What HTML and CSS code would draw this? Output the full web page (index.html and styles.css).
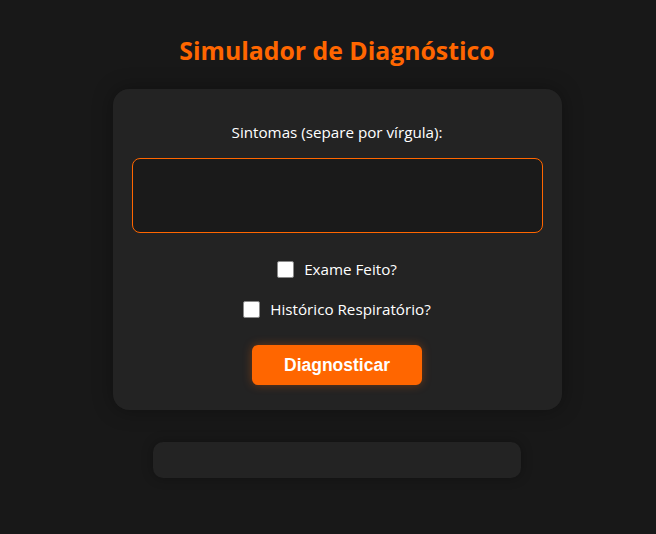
FILE: index.html
```html
<!DOCTYPE html>
<html lang="pt">
<head>
<meta charset="utf-8">
<title>Simulador de Diagnóstico</title>
<link rel="stylesheet" href="styles.css">
</head>
<body>
  <main class="page">
    <h1 class="title">Simulador de Diagnóstico</h1>
    <section class="card">
      <label class="field-label" for="sintomas">Sintomas (separe por vírgula):</label>
      <textarea id="sintomas" class="symptoms"></textarea>
      <label class="check-row"><input type="checkbox" class="check"> <span>Exame Feito?</span></label>
      <label class="check-row"><input type="checkbox" class="check"> <span>Histórico Respiratório?</span></label>
      <button class="btn" type="button">Diagnosticar</button>
    </section>
    <div class="result"></div>
  </main>
</body>
</html>
```
FILE: styles.css
```css
* { box-sizing: border-box; }
html, body { margin: 0; padding: 0; }
body {
  background: #181818;
  color: #ffffff;
  font-family: "Open Sans", "Noto Sans", sans-serif;
  min-height: 534px;
}
.page {
  display: flex;
  flex-direction: column;
  align-items: center;
  padding-top: 36px;
  padding-left: 18px;
}
.title {
  margin: 0 0 25px;
  color: #ff6600;
  font-size: 24.8px;
  line-height: 28px;
  font-weight: 700;
}
.card {
  width: 449px;
  background: #232323;
  border-radius: 16px;
  padding: 32px 19px 25px;
  display: flex;
  flex-direction: column;
  align-items: center;
  box-shadow: 0 0 20px rgba(0,0,0,0.35);
}
.field-label {
  font-size: 15.2px;
  line-height: 22px;
  margin-bottom: 15px;
}
.symptoms {
  width: 411px;
  height: 75px;
  background: #1a1a1a;
  border: 1px solid #ff6600;
  border-radius: 8px;
  resize: none;
  color: #fff;
  outline: none;
  display: block;
}
.check-row {
  display: flex;
  align-items: center;
  gap: 10px;
  font-size: 15.2px;
  line-height: 22px;
  margin-top: 25px;
}
.check-row + .check-row { margin-top: 18px; }
.check {
  appearance: none;
  -webkit-appearance: none;
  margin: 0;
  width: 17px;
  height: 17px;
  background: #fff;
  border: 1px solid #8a8a8a;
  border-radius: 2px;
}
.btn {
  margin-top: 25px;
  width: 170px;
  height: 40px;
  background: #ff6600;
  color: #fff;
  border: none;
  border-radius: 6px;
  font-family: "Liberation Sans", Arial, sans-serif;
  font-weight: 700;
  font-size: 17.5px;
  box-shadow: 0 0 10px rgba(255,102,0,0.35);
}
.result {
  margin-top: 32px;
  width: 368px;
  height: 36px;
  background: #232323;
  border-radius: 10px;
  box-shadow: 0 0 12px rgba(0,0,0,0.3);
}
```
